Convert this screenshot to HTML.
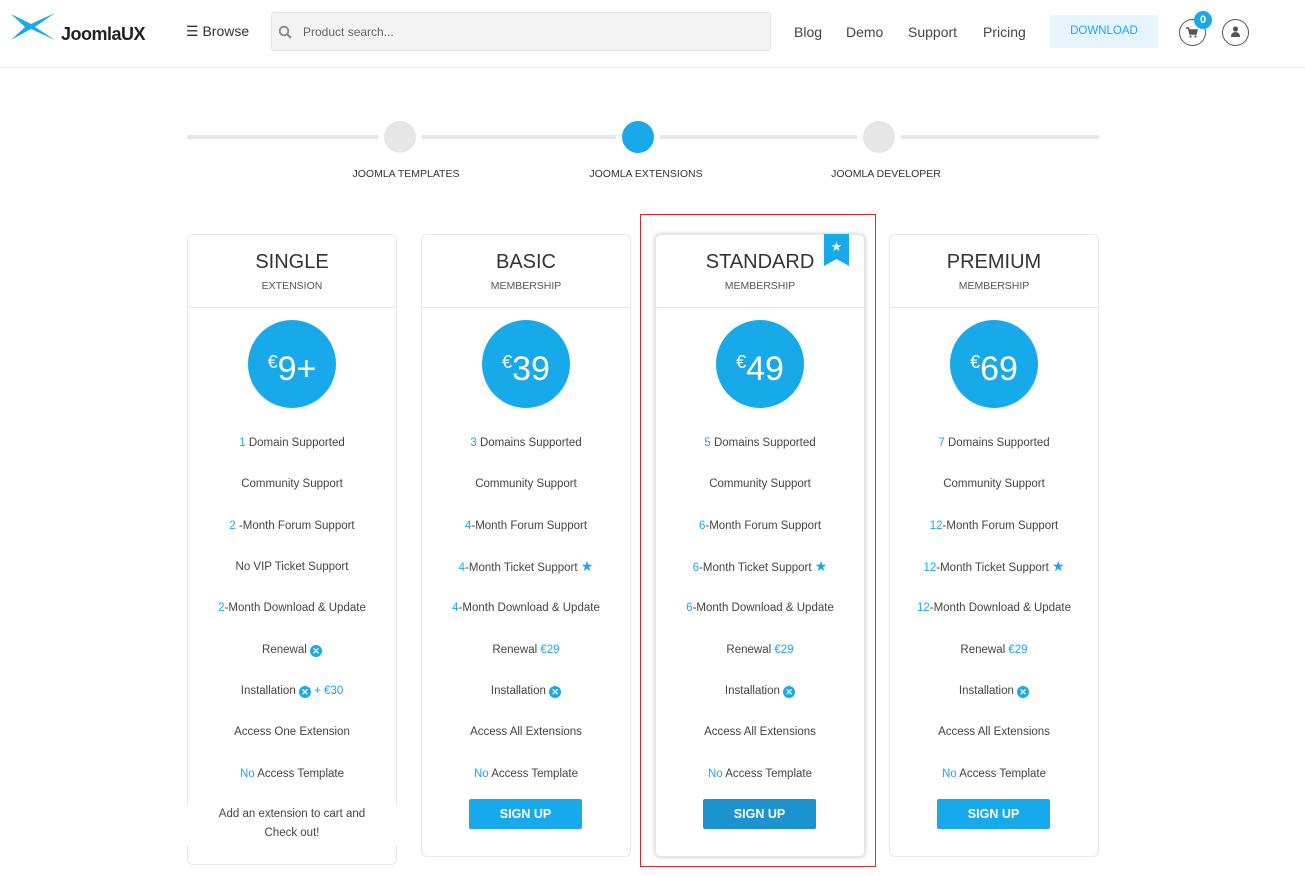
<!DOCTYPE html>
<html><head><meta charset="utf-8"><style>
*{box-sizing:border-box;margin:0;padding:0}
body{width:1305px;height:876px;overflow:hidden;background:#fff;font-family:"Liberation Sans",sans-serif;color:#444;position:relative}
.abs{position:absolute}
.hdr{position:absolute;left:0;top:0;width:1305px;height:68px;border-bottom:1px solid #eee}
.nav a{position:absolute;top:24px;font-size:14px;color:#444;text-decoration:none}
.card{position:absolute;top:234px;width:210px;height:623px;border:1px solid #e6e6e6;border-radius:6px;background:#fff}
.card .t{position:absolute;top:16px;width:100%;text-align:center;font-size:20px;color:#333}
.card .s{position:absolute;top:45px;width:100%;text-align:center;font-size:10.5px;color:#555}
.card .hl{position:absolute;top:72px;left:0;width:100%;border-top:1px solid #e6e6e6}
.circ{position:absolute;left:60px;top:85px;width:88px;height:88px;border-radius:50%;background:#18a9ea;color:#fff;text-align:center;line-height:84px;font-size:34px}
.circ sup{font-size:18px;vertical-align:12px}
.f{position:absolute;width:100%;text-align:center;font-size:11.5px;color:#444;height:16px;line-height:16px}
.b{color:#18a9ea}
.x{display:inline-block;width:12px;height:12px;border-radius:50%;background:#18a9ea;color:#fff;font-size:9px;line-height:12px;text-align:center;font-weight:bold;vertical-align:-1px}
.st{color:#18a9ea;font-size:14px;line-height:14px}
.btn{position:absolute;left:47px;top:564px;width:113px;height:30px;background:#18a9ea;color:#fff;font-size:12.5px;font-weight:bold;text-align:center;line-height:30px;border-radius:2px}
.lbl{position:absolute;top:168px;font-size:10.5px;color:#333;text-align:center;width:200px}
.dot{position:absolute;top:121px;width:32px;height:32px;border-radius:50%;background:#e6e6e6}
</style></head><body>
<div class="hdr">
<svg class="abs" style="left:9px;top:9px" width="50" height="34" viewBox="0 0 50 34"><path d="M2 5 L22 15 L46 4 L26 18 L46 31 L22 20 L2 31 L16 18 Z" fill="#18a9ea"/></svg>
<div class="abs" style="left:61px;top:24px;font-size:18px;font-weight:bold;color:#222;letter-spacing:-0.5px">JoomlaUX</div>
<div class="abs" style="left:186px;top:23px;font-size:14px;color:#333">&#9776; Browse</div>
<div class="abs" style="left:271px;top:12px;width:500px;height:39px;background:#f3f3f3;border:1px solid #e4e4e4;border-radius:3px"></div>
<svg class="abs" style="left:278px;top:25px" width="14" height="14" viewBox="0 0 14 14"><circle cx="6" cy="6" r="4.3" stroke="#888" stroke-width="1.8" fill="none"/><path d="M9 9 L13 13" stroke="#888" stroke-width="2"/></svg>
<div class="abs" style="left:303px;top:25px;font-size:12px;color:#666">Product search...</div>
<div class="nav"><a style="left:794px">Blog</a><a style="left:846px">Demo</a><a style="left:908px">Support</a><a style="left:983px">Pricing</a></div>
<div class="abs" style="left:1050px;top:15px;width:108px;height:33px;background:#e5f4fd;color:#18a9ea;font-size:11.5px;text-align:center;line-height:33px">DOWNLOAD</div>
<div class="abs" style="left:1179px;top:19px;width:27px;height:27px;border:1px solid #555;border-radius:50%"></div>
<svg class="abs" style="left:1186px;top:27px" width="12" height="11" viewBox="0 0 12 11"><path d="M0 1H2.5L4 7H10L11 3H3" fill="none" stroke="#555" stroke-width="1.5"/><path d="M3.5 3H11L10 7H4Z" fill="#555"/><circle cx="4.5" cy="9.5" r="1.1" fill="#555"/><circle cx="9.5" cy="9.5" r="1.1" fill="#555"/></svg>
<div class="abs" style="left:1194px;top:11px;width:18px;height:18px;background:#18a9ea;border-radius:50%;color:#fff;font-size:11px;font-weight:bold;text-align:center;line-height:18px">0</div>
<div class="abs" style="left:1222px;top:19px;width:27px;height:27px;border:1px solid #555;border-radius:50%"></div>
<svg class="abs" style="left:1229px;top:25px" width="13" height="13" viewBox="0 0 13 13"><circle cx="6.5" cy="4" r="2.6" fill="#555"/><path d="M2 12 Q2 7 6.5 7 Q11 7 11 12Z" fill="#555"/></svg>
</div>
<div class="abs" style="left:187px;top:135px;width:912px;height:4px;background:#e6e6e6"></div>
<div class="dot" style="left:384px;box-shadow:0 0 0 6px #fff"></div>
<div class="dot" style="left:622px;background:#18a9ea;box-shadow:0 0 0 6px #fff"></div>
<div class="dot" style="left:863px;box-shadow:0 0 0 6px #fff"></div>
<div class="lbl" style="left:306px">JOOMLA TEMPLATES</div>
<div class="lbl" style="left:546px">JOOMLA EXTENSIONS</div>
<div class="lbl" style="left:786px">JOOMLA DEVELOPER</div>
<div class="abs" style="left:640px;top:214px;width:236px;height:653px;border:1.5px solid #e0262c"></div>

<div class="card" style="left:187px;height:631px">
<div class="t">SINGLE</div><div class="s">EXTENSION</div><div class="hl"></div>
<div class="circ"><sup>€</sup>9+</div>
<div class="f" style="top:200px"><span class="b">1</span> Domain Supported</div>
<div class="f" style="top:241px">Community Support</div>
<div class="f" style="top:283px"><span class="b">2</span> -Month Forum Support</div>
<div class="f" style="top:324px">No VIP Ticket Support</div>
<div class="f" style="top:365px"><span class="b">2</span>-Month Download &amp; Update</div>
<div class="f" style="top:407px">Renewal <span class="x">✕</span></div>
<div class="f" style="top:448px">Installation <span class="x">✕</span> <span class="b">+ €30</span></div>
<div class="f" style="top:489px">Access One Extension</div>
<div class="f" style="top:531px"><span class="b">No</span> Access Template</div>
<div class="f" style="top:570px;line-height:19px;height:40px;background:#fff;left:-2px;width:212px">Add an extension to cart and<br>Check out!</div>
</div>

<div class="card" style="left:421px">
<div class="t">BASIC</div><div class="s">MEMBERSHIP</div><div class="hl"></div>
<div class="circ"><sup>€</sup>39</div>
<div class="f" style="top:200px"><span class="b">3</span> Domains Supported</div>
<div class="f" style="top:241px">Community Support</div>
<div class="f" style="top:283px"><span class="b">4</span>-Month Forum Support</div>
<div class="f" style="top:324px"><span class="b">4</span>-Month Ticket Support <span class="st">★</span></div>
<div class="f" style="top:365px"><span class="b">4</span>-Month Download &amp; Update</div>
<div class="f" style="top:407px">Renewal <span class="b">€29</span></div>
<div class="f" style="top:448px">Installation <span class="x">✕</span></div>
<div class="f" style="top:489px">Access All Extensions</div>
<div class="f" style="top:531px"><span class="b">No</span> Access Template</div>
<div class="btn">SIGN UP</div>
</div>

<div class="card" style="left:655px;box-shadow:0 0 4px rgba(0,0,0,.25)">
<div class="t">STANDARD</div><div class="s">MEMBERSHIP</div><div class="hl"></div>
<svg class="abs" style="left:168px;top:-1px" width="25" height="32" viewBox="0 0 25 32"><path d="M0 0H25V32L12.5 25L0 32Z" fill="#18a9ea"/><text x="12.5" y="17" fill="#fff" font-size="13" text-anchor="middle" font-family="DejaVu Sans">★</text></svg>
<div class="circ"><sup>€</sup>49</div>
<div class="f" style="top:200px"><span class="b">5</span> Domains Supported</div>
<div class="f" style="top:241px">Community Support</div>
<div class="f" style="top:283px"><span class="b">6</span>-Month Forum Support</div>
<div class="f" style="top:324px"><span class="b">6</span>-Month Ticket Support <span class="st">★</span></div>
<div class="f" style="top:365px"><span class="b">6</span>-Month Download &amp; Update</div>
<div class="f" style="top:407px">Renewal <span class="b">€29</span></div>
<div class="f" style="top:448px">Installation <span class="x">✕</span></div>
<div class="f" style="top:489px">Access All Extensions</div>
<div class="f" style="top:531px"><span class="b">No</span> Access Template</div>
<div class="btn" style="background:#1a93cf">SIGN UP</div>
</div>

<div class="card" style="left:889px">
<div class="t">PREMIUM</div><div class="s">MEMBERSHIP</div><div class="hl"></div>
<div class="circ"><sup>€</sup>69</div>
<div class="f" style="top:200px"><span class="b">7</span> Domains Supported</div>
<div class="f" style="top:241px">Community Support</div>
<div class="f" style="top:283px"><span class="b">12</span>-Month Forum Support</div>
<div class="f" style="top:324px"><span class="b">12</span>-Month Ticket Support <span class="st">★</span></div>
<div class="f" style="top:365px"><span class="b">12</span>-Month Download &amp; Update</div>
<div class="f" style="top:407px">Renewal <span class="b">€29</span></div>
<div class="f" style="top:448px">Installation <span class="x">✕</span></div>
<div class="f" style="top:489px">Access All Extensions</div>
<div class="f" style="top:531px"><span class="b">No</span> Access Template</div>
<div class="btn">SIGN UP</div>
</div>
</body></html>
